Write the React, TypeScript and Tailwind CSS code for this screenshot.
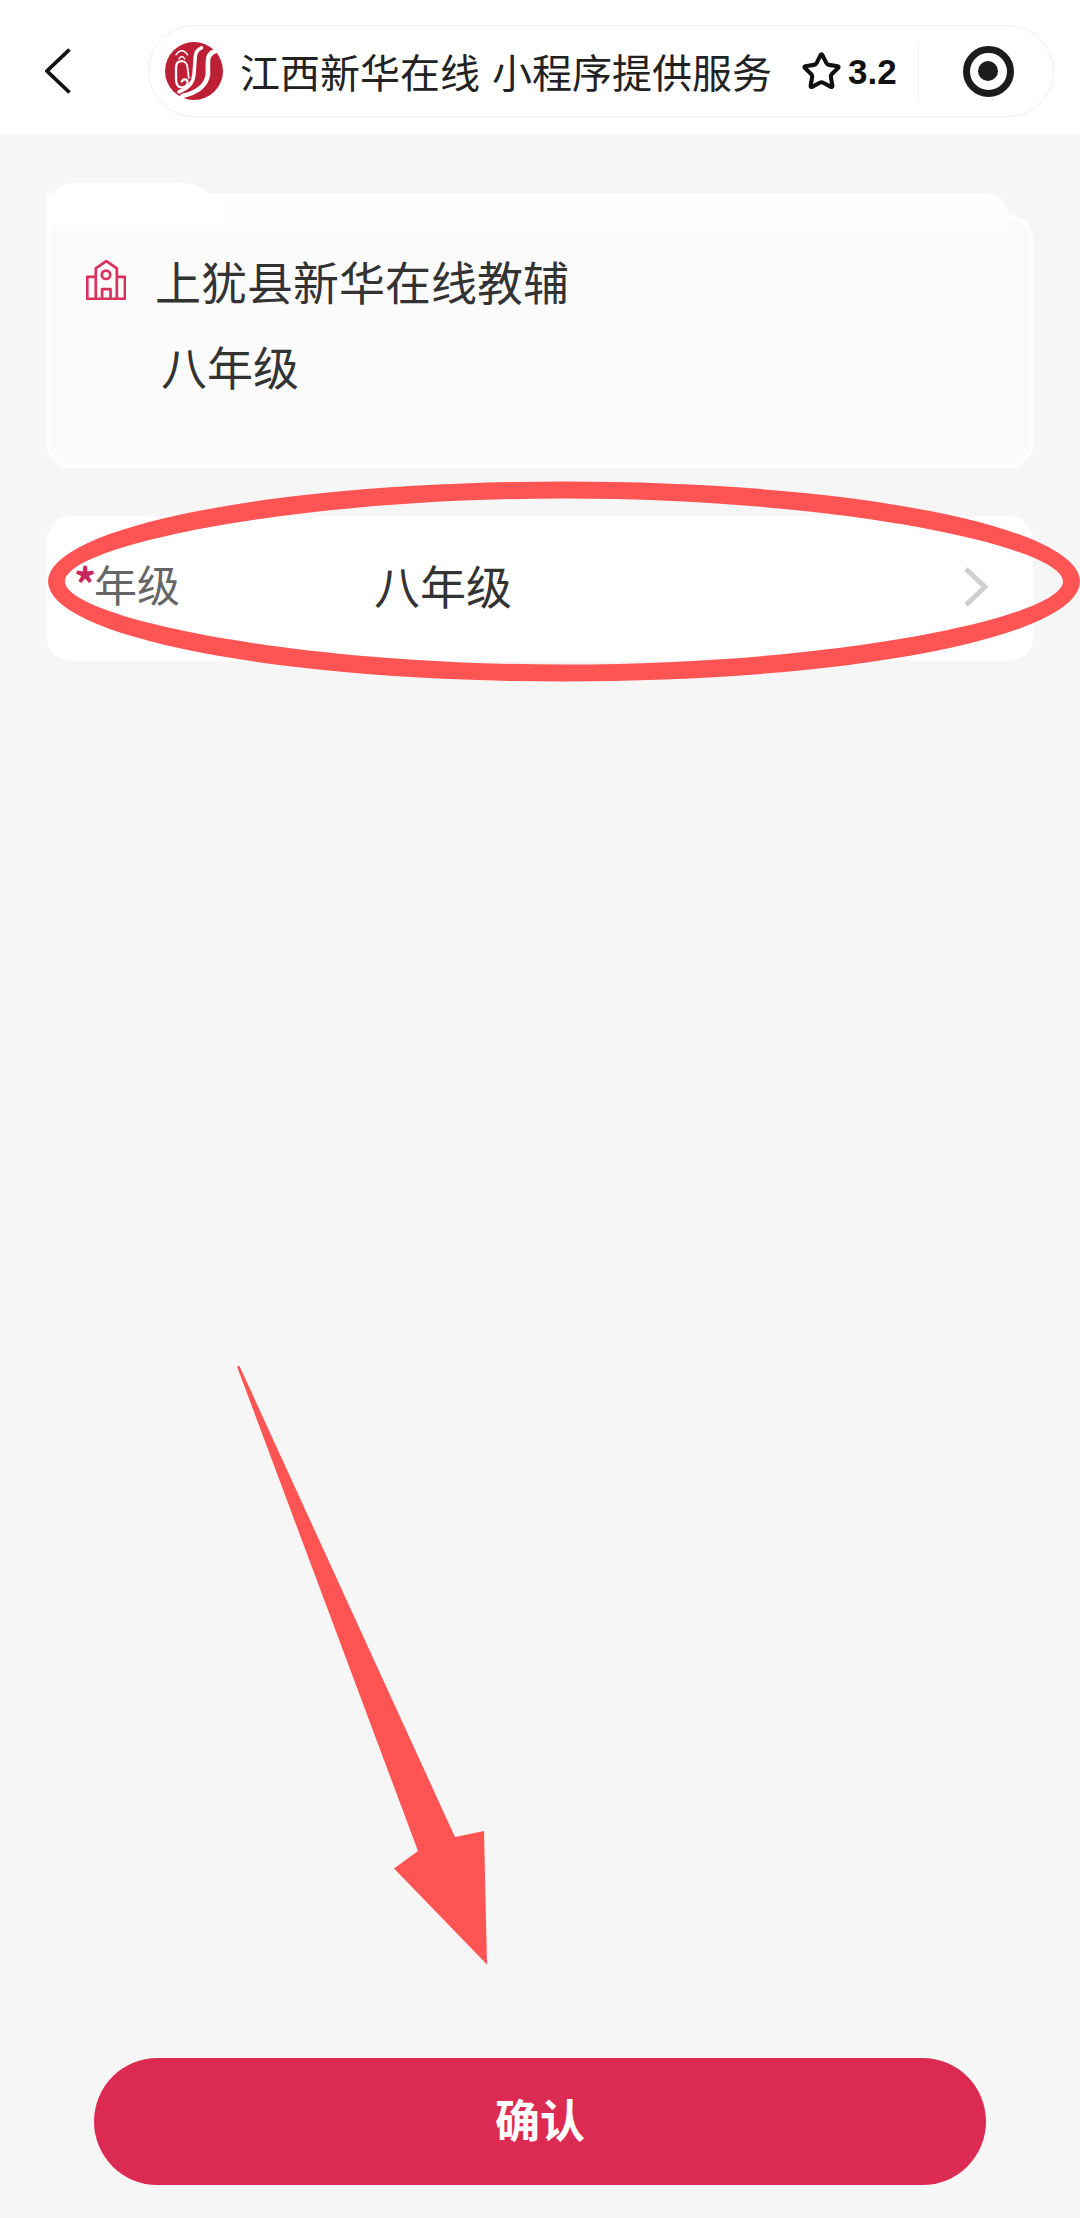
import React from 'react';
import { Star } from 'lucide-react';

const font = "font-['Noto_Sans_CJK_SC','Noto_Sans',sans-serif]";

const Logo = () => (
  <svg width="58" height="58" viewBox="0 0 100 100" className="shrink-0">
    <circle cx="50" cy="50" r="50" fill="#bd2035" />
    <g fill="none" stroke="#fff" strokeLinecap="round">
      <path d="M19 22 Q29 8 39 22" strokeWidth="2.5" />
      <path d="M24 29 Q29 21 34 29" strokeWidth="2.5" />
      <path d="M29 33 Q19 33 19 44 L19 66 Q20 80 32 78 Q42 74 38 66 Q33 62 29 68" strokeWidth="4" />
      <path d="M29 33 Q39 34 39 46 L41 62" strokeWidth="3" />
      <path d="M63 10 Q52 14 52 28 L50 56 Q48 78 24 86" strokeWidth="6" />
      <path d="M86 16 Q74 20 74 34 L74 56 Q70 84 30 93" strokeWidth="8" />
    </g>
  </svg>
);

const SchoolIcon = () => (
  <svg width="40" height="40" viewBox="0 0 38 38" fill="none" stroke="#d8335f" strokeWidth="2.6" strokeLinejoin="round" className="shrink-0">
    <path d="M9.3 37 V8 L19.3 1 L29.3 8 V37" />
    <path d="M9.3 16 H1.2 V37 H37 V16 H29.3" />
    <circle cx="19" cy="14" r="4" />
    <path d="M15.3 37 V27.7 H23.3 V37" />
  </svg>
);

const App: React.FC = () => {
  return (
    <div className={`relative flex flex-col w-[1080px] h-[2218px] overflow-hidden bg-[#f6f6f6] ${font}`}>
      {/* nav bar */}
      <header className="flex items-center h-[135px] bg-white shrink-0">
        <svg width="26" height="46" viewBox="0 0 26 46" fill="none" stroke="#111" strokeWidth="3.8" className="ml-[45px] mt-[7px] shrink-0">
          <path d="M24.5 1.5 L2 23 L24.5 44.5" />
        </svg>
        <div className="flex items-center ml-[77px] mt-[7px] w-[906px] h-[92px] rounded-full border border-[#eeeeee] pl-[16px]">
          <Logo />
          <span className="ml-[17px] text-[40px] leading-none text-[#222] whitespace-nowrap">江西新华在线</span>
          <span className="ml-[12px] text-[40px] leading-none text-[#222] whitespace-nowrap">小程序提供服务</span>
          <Star size={41} strokeWidth={2.4} className="ml-[29px] text-[#111] shrink-0" />
          <span className="ml-[6px] text-[35px] font-bold leading-none text-[#111] font-['Liberation_Sans',sans-serif]">3.2</span>
          <div className="ml-[21px] w-px h-[57px] bg-[#eeeeee] shrink-0" />
          <div className="flex items-center justify-center ml-[44px] w-[51px] h-[51px] rounded-full border-[7px] border-[#1c1c1c] shrink-0">
            <div className="w-[20px] h-[20px] rounded-full bg-[#1c1c1c]" />
          </div>
        </div>
      </header>

      <main className="flex flex-col flex-1 px-[47px] pt-[58px]">
        {/* store card */}
        <div className="relative z-10 mr-[24px] h-[32px] bg-[#fefefe] rounded-tr-[24px]">
          <div className="absolute left-0 -top-[10px] w-[177px] h-[42px] bg-white rounded-tl-[30px] rounded-tr-[48px]" />
        </div>
        <div className="-mt-[10px] h-[253px] rounded-b-[24px] rounded-tr-[24px] border-[3px] border-[#fefefe] bg-[#fbfbfb] pt-[32px] pl-[36px]">
          <div className="flex items-center h-[60px]">
            <SchoolIcon />
            <span className="ml-[29px] text-[46px] leading-[60px] text-[#333]">上犹县新华在线教辅</span>
          </div>
          <div className="mt-[25px] pl-[75px] text-[46px] leading-[60px] text-[#333]">八年级</div>
        </div>

        {/* grade row */}
        <div className="flex items-center mt-[48px] w-[986px] h-[145px] rounded-[24px] bg-white pl-[27px] pr-[45px]">
          <span className="w-[20px] text-[44px] font-bold leading-none text-[#c9285f] -mt-[14px]">*</span>
          <span className="w-[280px] text-[43px] leading-none text-[#666] -mt-[10px]">年级</span>
          <span className="text-[46px] leading-none text-[#333] -mt-[10px]">八年级</span>
          <svg width="26" height="40" viewBox="0 0 26 40" fill="none" stroke="#cfcfcf" strokeWidth="5" className="ml-auto -mt-[3px] shrink-0">
            <path d="M4 2 L23 20 L4 38" />
          </svg>
        </div>

        <div className="flex-1" />

        <button className="flex items-center justify-center w-[892px] h-[127px] ml-[47px] mb-[33px] pb-[6px] rounded-full bg-[#dc2b52] text-white text-[45px] font-bold leading-none">
          确认
        </button>
      </main>

      {/* annotation marks drawn over the page */}
      <svg className="absolute inset-0 pointer-events-none" width="1080" height="2218" viewBox="0 0 1080 2218">
        <path
          fillRule="evenodd"
          fill="#ff5454"
          d="M48 581.5 a516 100 0 1 0 1032 0 a516 100 0 1 0 -1032 0 Z M65 581.5 C65 546.5 289 498.5 564 498.5 C839 498.5 1063 546.5 1063 581.5 C1063 616.5 839 664.5 564 664.5 C289 664.5 65 616.5 65 581.5 Z"
        />
        <path d="M237 1366.5 L239.5 1366 L455 1837 L484 1831 L487 1964.5 L394 1868.6 L418 1851 Z" fill="#ff5454" />
      </svg>
    </div>
  );
};

export default App;
